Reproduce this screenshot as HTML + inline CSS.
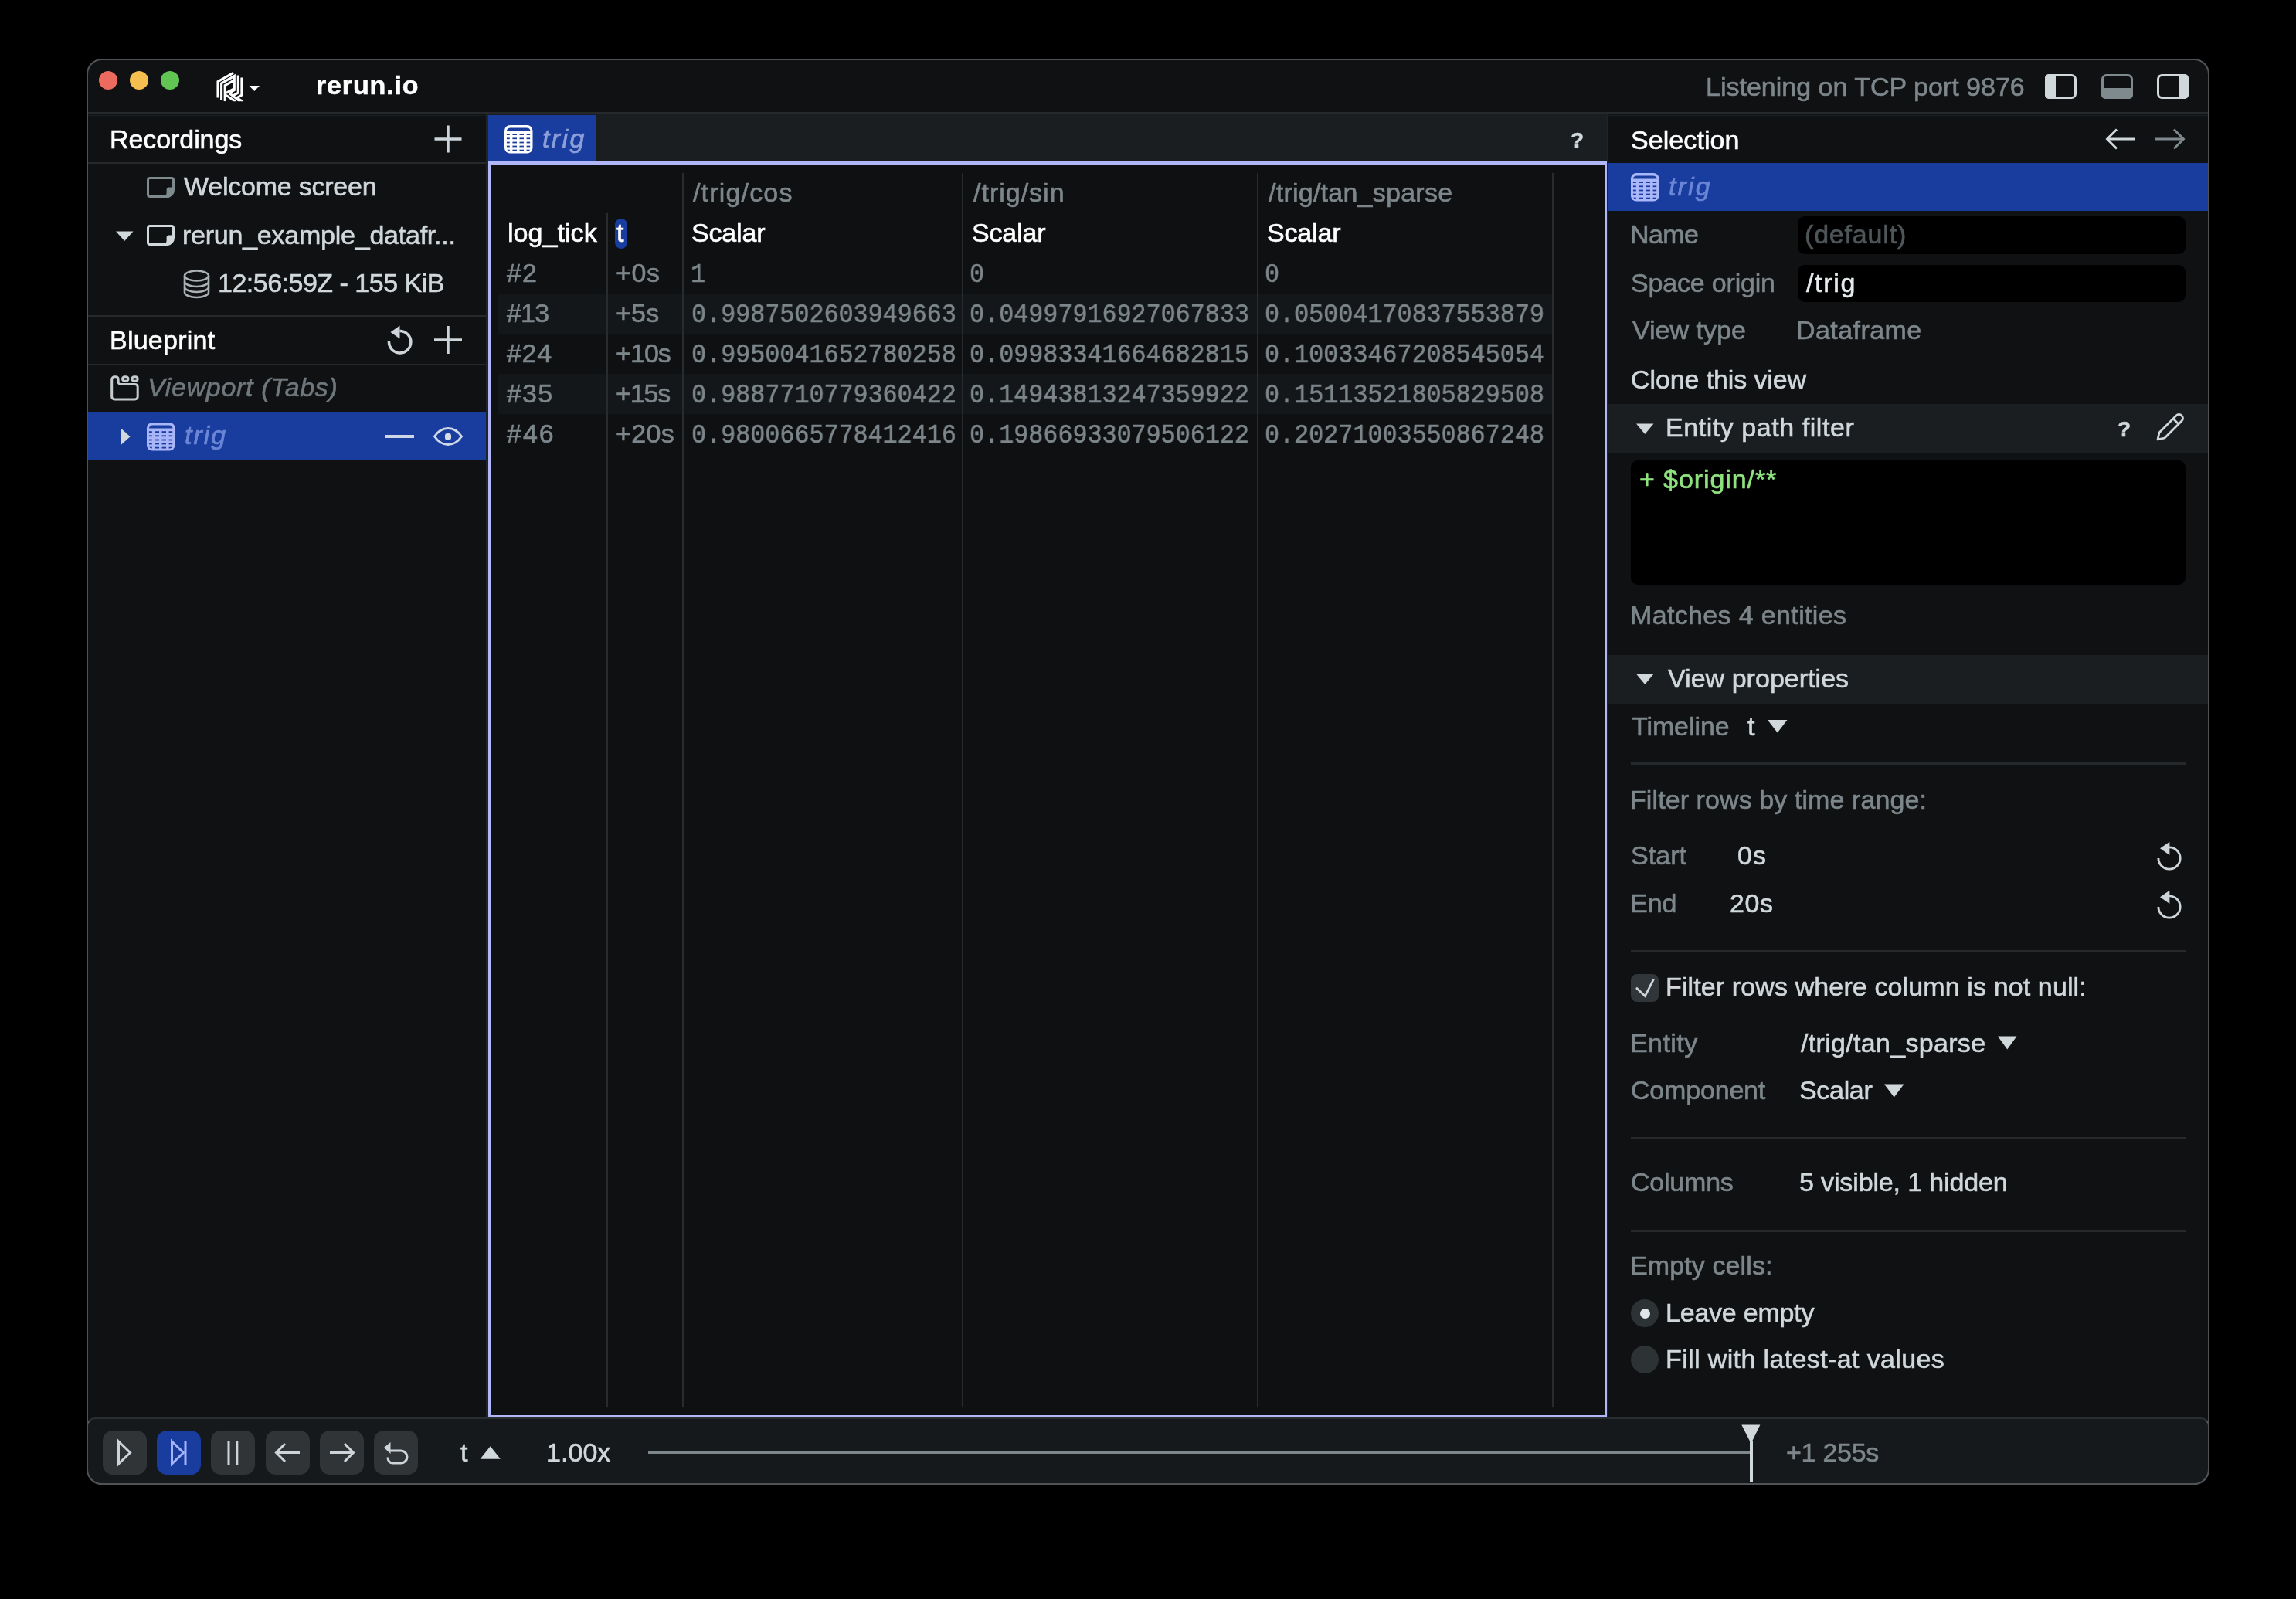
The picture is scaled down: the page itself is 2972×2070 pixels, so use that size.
<!DOCTYPE html>
<html><head><meta charset="utf-8"><style>
html,body{margin:0;padding:0;background:#000000;width:2972px;height:2070px;overflow:hidden}
body>div, #w>div{position:absolute}
.t{white-space:pre;will-change:transform;-webkit-text-stroke:0.6px currentColor}
</style></head><body>
<div style="left:112px;top:76px;width:2748px;height:1846px;background:#0f1113;border-radius:20px;box-sizing:border-box;border:2px solid #505355;"></div><div style="left:114px;top:145px;width:2744px;height:3px;background:#25292c;border-radius:0px;"></div><div style="left:114px;top:149px;width:515px;height:1px;background:#1b1f22;border-radius:0px;"></div><div style="left:2082px;top:149px;width:776px;height:1px;background:#1b1f22;border-radius:0px;"></div><div style="left:128px;top:92px;width:24px;height:24px;background:#ec6a5e;border-radius:12px;"></div><div style="left:168px;top:92px;width:24px;height:24px;background:#f4bf4f;border-radius:12px;"></div><div style="left:208px;top:92px;width:24px;height:24px;background:#61c554;border-radius:12px;"></div><svg style="position:absolute;left:276px;top:89px;overflow:visible" width="44" height="46" viewBox="0 0 44 46"><defs><clipPath id="lc"><rect x="0" y="0" width="44" height="42.3"/></clipPath></defs><g clip-path="url(#lc)" fill="none" stroke="#fff" stroke-width="3.1" stroke-linejoin="miter" stroke-miterlimit="10">
<polyline points="6,37.6 6,16.6 26,5.3"/>
<polyline points="10.6,40.3 10.6,19 27.3,9.4 27.3,27.6 21.8,30.8"/>
<polyline points="15.2,42.2 15.2,21.6 25.4,15.8"/>
<polyline points="16.8,31.3 27.3,25.6"/>
<polyline points="32.3,8.6 32.3,31.2 25.5,35"/>
<polyline points="36.9,11.6 36.9,34.2 30.6,37.8 38.5,42.5"/>
<polyline points="16.6,34.2 29,42.5"/>
<polyline points="20.5,31.8 23,33.2 35,42.5"/>
</g></svg><svg style="position:absolute;left:320px;top:108px;overflow:visible" width="20" height="12" viewBox="0 0 20 12"><polygon points="2.5,3 16,3 9.25,10" fill="#fff"/></svg><div class="t" style="left:408.50px;top:93.01px;font-size:34px;line-height:34px;color:#ffffff;font-weight:700;font-style:normal;font-family:'Liberation Sans', sans-serif;letter-spacing:0.843px;">rerun.io</div><div class="t" style="left:2208.30px;top:94.71px;font-size:34px;line-height:34px;color:#7d878b;font-weight:400;font-style:normal;font-family:'Liberation Sans', sans-serif;letter-spacing:0.000px;">Listening on TCP port 9876</div><svg style="position:absolute;left:2645px;top:95px;overflow:visible" width="46" height="36" viewBox="0 0 46 36"><rect x="3.5" y="2.5" width="38" height="29" rx="5" fill="none" stroke="#d0d8dc" stroke-width="3"/><path d="M7 1H16V33H7A5 5 0 0 1 2 28V6A5 5 0 0 1 7 1Z" fill="#d0d8dc"/></svg><svg style="position:absolute;left:2718px;top:95px;overflow:visible" width="46" height="36" viewBox="0 0 46 36"><rect x="3.5" y="2.5" width="38" height="29" rx="5" fill="none" stroke="#7f8a8f" stroke-width="3"/><path d="M2 19H43V28A5 5 0 0 1 38 33H7A5 5 0 0 1 2 28Z" fill="#7f8a8f"/></svg><svg style="position:absolute;left:2790px;top:95px;overflow:visible" width="46" height="36" viewBox="0 0 46 36"><rect x="3.5" y="2.5" width="38" height="29" rx="5" fill="none" stroke="#d0d8dc" stroke-width="3"/><path d="M30 1H38A5 5 0 0 1 43 6V28A5 5 0 0 1 38 33H30Z" fill="#d0d8dc"/></svg><div style="left:629px;top:148px;width:3px;height:1688px;background:#202427;border-radius:0px;"></div><div class="t" style="left:142.00px;top:162.61px;font-size:34px;line-height:34px;color:#ffffff;font-weight:400;font-style:normal;font-family:'Liberation Sans', sans-serif;letter-spacing:-0.078px;">Recordings</div><svg style="position:absolute;left:560px;top:160px;overflow:visible" width="40" height="40" viewBox="0 0 40 40"><path d="M20 2.5V37.5M2.5 20H37.5" stroke="#cdd5da" stroke-width="3.5"/></svg><div style="left:114px;top:210px;width:515px;height:2px;background:#25292c;border-radius:0px;"></div><svg style="position:absolute;left:190px;top:229px;overflow:visible" width="37" height="28" viewBox="0 0 37 28"><path d="M4 1.5H32A2.5 2.5 0 0 1 34.5 4V17A8.5 8.5 0 0 1 26 25.5H4A2.5 2.5 0 0 1 1.5 23V4A2.5 2.5 0 0 1 4 1.5Z" fill="none" stroke="#7f8a8f" stroke-width="3"/>
<path d="M35 13.6H28.6A3 3 0 0 0 25.6 16.6V20.6A4.9 4.9 0 0 1 20.7 25.5L20.7 27H26A9 9 0 0 0 35 18Z" fill="#7f8a8f"/></svg><div class="t" style="left:237.60px;top:224.21px;font-size:34px;line-height:34px;color:#d0d8dc;font-weight:400;font-style:normal;font-family:'Liberation Sans', sans-serif;letter-spacing:-0.231px;">Welcome screen</div><svg style="position:absolute;left:148px;top:297px;overflow:visible" width="26" height="17" viewBox="0 0 26 17"><polygon points="2,2.5 24.5,2.5 13.25,15" fill="#d0d8dc"/></svg><svg style="position:absolute;left:190px;top:291px;overflow:visible" width="37" height="28" viewBox="0 0 37 28"><path d="M4 1.5H32A2.5 2.5 0 0 1 34.5 4V17A8.5 8.5 0 0 1 26 25.5H4A2.5 2.5 0 0 1 1.5 23V4A2.5 2.5 0 0 1 4 1.5Z" fill="none" stroke="#d0d8dc" stroke-width="3"/>
<path d="M35 13.6H28.6A3 3 0 0 0 25.6 16.6V20.6A4.9 4.9 0 0 1 20.7 25.5L20.7 27H26A9 9 0 0 0 35 18Z" fill="#d0d8dc"/></svg><div class="t" style="left:235.60px;top:287.21px;font-size:34px;line-height:34px;color:#d0d8dc;font-weight:400;font-style:normal;font-family:'Liberation Sans', sans-serif;letter-spacing:-0.236px;">rerun_example_datafr...</div><svg style="position:absolute;left:236px;top:348px;overflow:visible" width="37" height="40" viewBox="0 0 37 40"><g fill="none" stroke="#aab2b6" stroke-width="2.6">
<ellipse cx="18.5" cy="9" rx="15.5" ry="6.5"/>
<path d="M3 9V30.5C3 34 10 37 18.5 37S34 34 34 30.5V9"/>
<path d="M3 16.5C3 20 10 23 18.5 23S34 20 34 16.5"/>
<path d="M3 23.5C3 27 10 30 18.5 30S34 27 34 23.5"/></g></svg><div class="t" style="left:282.00px;top:348.81px;font-size:34px;line-height:34px;color:#d0d8dc;font-weight:400;font-style:normal;font-family:'Liberation Sans', sans-serif;letter-spacing:-0.500px;">12:56:59Z - 155 KiB</div><div style="left:114px;top:408px;width:515px;height:2px;background:#25292c;border-radius:0px;"></div><div class="t" style="left:142.00px;top:422.81px;font-size:34px;line-height:34px;color:#ffffff;font-weight:400;font-style:normal;font-family:'Liberation Sans', sans-serif;letter-spacing:0.237px;">Blueprint</div><svg style="position:absolute;left:498px;top:418px;overflow:visible" width="40" height="44" viewBox="0 0 40 44"><path d="M503.5 441.5A14.2 14.2 0 1 0 517.5 428.5" transform="translate(-498,-418)" fill="none" stroke="#cdd5da" stroke-width="3.5"/>
<polygon points="7.5,12 19.5,3.5 19.5,20.5" fill="#cdd5da"/></svg><svg style="position:absolute;left:560px;top:420px;overflow:visible" width="40" height="40" viewBox="0 0 40 40"><path d="M20 2V38M2 20H38" stroke="#cdd5da" stroke-width="3.5"/></svg><div style="left:114px;top:471px;width:515px;height:2px;background:#25292c;border-radius:0px;"></div><svg style="position:absolute;left:141px;top:484px;overflow:visible" width="42" height="37" viewBox="0 0 42 37"><g fill="none" stroke="#c3cbcf" stroke-width="3">
<path d="M3.7 7.3A3.5 3.5 0 0 1 7.2 3.8H9.1A3 3 0 0 1 12.1 6.8V10.4A3 3 0 0 0 15.1 13.4H33.7A3.5 3.5 0 0 1 37.2 16.9V29.4A3.5 3.5 0 0 1 33.7 32.9H7.2A3.5 3.5 0 0 1 3.7 29.4Z"/>
<rect x="17.5" y="3.8" width="7.5" height="5.5" rx="2.75"/><rect x="29.8" y="3.8" width="7.4" height="5.5" rx="2.75"/></g></svg><div class="t" style="left:191.00px;top:483.81px;font-size:34px;line-height:34px;color:#6f787c;font-weight:400;font-style:italic;font-family:'Liberation Sans', sans-serif;letter-spacing:0.686px;">Viewport (Tabs)</div><div style="left:114px;top:534px;width:515px;height:61px;background:#193c9f;border-radius:0px;"></div><svg style="position:absolute;left:152px;top:550px;overflow:visible" width="20" height="30" viewBox="0 0 20 30"><polygon points="4,4 16.5,15.2 4,26.5" fill="#d0d8dc"/></svg><svg style="position:absolute;left:190px;top:546.5px;overflow:visible" width="37" height="37" viewBox="0 0 37 37"><defs><clipPath id="tic1"><rect x="2.6" y="2.6" width="31.3" height="31.3" rx="4.8"/></clipPath></defs>
<rect x="0" y="0" width="36.5" height="36.5" rx="7.2" fill="#aab6fa"/>
<g clip-path="url(#tic1)" fill="#193c9f"><path d="M2.8 7.4L33.7 7.4Q33 3.6 28.5 3.4L8 3.4Q3.5 3.6 2.8 7.4Z"/><rect x="2.8" y="11.2" width="4.0" height="1.8"/><rect x="10.4" y="11.2" width="5.6" height="1.8"/><rect x="19.5" y="11.2" width="5.5" height="1.8"/><rect x="28.6" y="11.2" width="4.6" height="1.8"/><rect x="2.8" y="16.4" width="4.0" height="1.8"/><rect x="10.4" y="16.4" width="5.6" height="1.8"/><rect x="19.5" y="16.4" width="5.5" height="1.8"/><rect x="28.6" y="16.4" width="4.6" height="1.8"/><rect x="2.8" y="21.6" width="4.0" height="1.8"/><rect x="10.4" y="21.6" width="5.6" height="1.8"/><rect x="19.5" y="21.6" width="5.5" height="1.8"/><rect x="28.6" y="21.6" width="4.6" height="1.8"/><rect x="2.8" y="26.6" width="4.0" height="1.8"/><rect x="10.4" y="26.6" width="5.6" height="1.8"/><rect x="19.5" y="26.6" width="5.5" height="1.8"/><rect x="28.6" y="26.6" width="4.6" height="1.8"/><rect x="2.8" y="31.7" width="4.0" height="1.8"/><rect x="10.4" y="31.7" width="5.6" height="1.8"/><rect x="19.5" y="31.7" width="5.5" height="1.8"/><rect x="28.6" y="31.7" width="4.6" height="1.8"/></g></svg><div class="t" style="left:239.00px;top:546.11px;font-size:34px;line-height:34px;color:#6c86d6;font-weight:400;font-style:italic;font-family:'Liberation Sans', sans-serif;letter-spacing:2.000px;">trig</div><div style="left:499px;top:563px;width:37px;height:3.7000000000000455px;background:#cdd7e6;border-radius:0px;"></div><svg style="position:absolute;left:560px;top:552px;overflow:visible" width="40" height="26" viewBox="0 0 40 26"><path d="M2.5 13C8 5 14 2.5 20 2.5S32 5 37.5 13C32 21 26 23.5 20 23.5S8 21 2.5 13Z" fill="none" stroke="#cdd7e6" stroke-width="3"/>
<rect x="16" y="9" width="8" height="8.5" rx="3" fill="#d5dde4"/></svg><div style="left:632px;top:148px;width:1448px;height:60.599999999999994px;background:#1b1e21;border-radius:0px;"></div><div style="left:632px;top:148.7px;width:140px;height:59.30000000000001px;background:#193c9f;border-radius:0px;"></div><svg style="position:absolute;left:653px;top:161.5px;overflow:visible" width="37" height="37" viewBox="0 0 37 37"><defs><clipPath id="tic2"><rect x="2.6" y="2.6" width="31.3" height="31.3" rx="4.8"/></clipPath></defs>
<rect x="0" y="0" width="36.5" height="36.5" rx="7.2" fill="#ffffff"/>
<g clip-path="url(#tic2)" fill="#193c9f"><path d="M2.8 7.4L33.7 7.4Q33 3.6 28.5 3.4L8 3.4Q3.5 3.6 2.8 7.4Z"/><rect x="2.8" y="11.2" width="4.0" height="1.8"/><rect x="10.4" y="11.2" width="5.6" height="1.8"/><rect x="19.5" y="11.2" width="5.5" height="1.8"/><rect x="28.6" y="11.2" width="4.6" height="1.8"/><rect x="2.8" y="16.4" width="4.0" height="1.8"/><rect x="10.4" y="16.4" width="5.6" height="1.8"/><rect x="19.5" y="16.4" width="5.5" height="1.8"/><rect x="28.6" y="16.4" width="4.6" height="1.8"/><rect x="2.8" y="21.6" width="4.0" height="1.8"/><rect x="10.4" y="21.6" width="5.6" height="1.8"/><rect x="19.5" y="21.6" width="5.5" height="1.8"/><rect x="28.6" y="21.6" width="4.6" height="1.8"/><rect x="2.8" y="26.6" width="4.0" height="1.8"/><rect x="10.4" y="26.6" width="5.6" height="1.8"/><rect x="19.5" y="26.6" width="5.5" height="1.8"/><rect x="28.6" y="26.6" width="4.6" height="1.8"/><rect x="2.8" y="31.7" width="4.0" height="1.8"/><rect x="10.4" y="31.7" width="5.6" height="1.8"/><rect x="19.5" y="31.7" width="5.5" height="1.8"/><rect x="28.6" y="31.7" width="4.6" height="1.8"/></g></svg><div class="t" style="left:701.50px;top:161.71px;font-size:34px;line-height:34px;color:#8d9fd9;font-weight:400;font-style:italic;font-family:'Liberation Sans', sans-serif;letter-spacing:2.367px;">trig</div><div class="t" style="left:2033.00px;top:167.99px;font-size:28px;line-height:28px;color:#d0d8dc;font-weight:700;font-style:normal;font-family:'Liberation Sans', sans-serif;letter-spacing:0.000px;">?</div><div style="left:632px;top:208.6px;width:1448px;height:1626.4px;background:#0e1012;border-radius:0px;box-sizing:border-box;border:3px solid #b0b6f7;border-top-width:5.2px;"></div><div style="left:645px;top:379.8px;width:1365px;height:52.0px;background:#141719;border-radius:0px;"></div><div style="left:645px;top:484px;width:1365px;height:51.700000000000045px;background:#141719;border-radius:0px;"></div><div style="left:784.5px;top:276px;width:2.0px;height:1546px;background:#292c2f;border-radius:0px;"></div><div style="left:883px;top:224px;width:2px;height:1598px;background:#292c2f;border-radius:0px;"></div><div style="left:1245px;top:224px;width:2px;height:1598px;background:#292c2f;border-radius:0px;"></div><div style="left:1627px;top:224px;width:2px;height:1598px;background:#292c2f;border-radius:0px;"></div><div style="left:2009px;top:224px;width:2px;height:1598px;background:#292c2f;border-radius:0px;"></div><div class="t" style="left:897.40px;top:231.91px;font-size:34px;line-height:34px;color:#7d878b;font-weight:400;font-style:normal;font-family:'Liberation Sans', sans-serif;letter-spacing:1.175px;">/trig/cos</div><div class="t" style="left:1260.00px;top:231.81px;font-size:34px;line-height:34px;color:#7d878b;font-weight:400;font-style:normal;font-family:'Liberation Sans', sans-serif;letter-spacing:1.000px;">/trig/sin</div><div class="t" style="left:1642.00px;top:231.81px;font-size:34px;line-height:34px;color:#7d878b;font-weight:400;font-style:normal;font-family:'Liberation Sans', sans-serif;letter-spacing:0.247px;">/trig/tan_sparse</div><div class="t" style="left:657.20px;top:284.01px;font-size:34px;line-height:34px;color:#ffffff;font-weight:400;font-style:normal;font-family:'Liberation Sans', sans-serif;letter-spacing:0.057px;">log_tick</div><div style="left:795.5px;top:283px;width:16.0px;height:38.5px;background:#193c9f;border-radius:8px;"></div><div class="t" style="left:797.50px;top:284.01px;font-size:34px;line-height:34px;color:#ffffff;font-weight:400;font-style:normal;font-family:'Liberation Sans', sans-serif;letter-spacing:0.000px;">t</div><div class="t" style="left:895.40px;top:284.01px;font-size:34px;line-height:34px;color:#ffffff;font-weight:400;font-style:normal;font-family:'Liberation Sans', sans-serif;letter-spacing:-0.180px;">Scalar</div><div class="t" style="left:1258.00px;top:284.01px;font-size:34px;line-height:34px;color:#ffffff;font-weight:400;font-style:normal;font-family:'Liberation Sans', sans-serif;letter-spacing:-0.180px;">Scalar</div><div class="t" style="left:1640.00px;top:284.01px;font-size:34px;line-height:34px;color:#ffffff;font-weight:400;font-style:normal;font-family:'Liberation Sans', sans-serif;letter-spacing:-0.180px;">Scalar</div><div class="t" style="left:655.50px;top:335.91px;font-size:34px;line-height:34px;color:#7d878b;font-weight:400;font-style:normal;font-family:'Liberation Sans', sans-serif;letter-spacing:1.100px;">#2</div><div class="t" style="left:796.50px;top:335.91px;font-size:34px;line-height:34px;color:#7d878b;font-weight:400;font-style:normal;font-family:'Liberation Sans', sans-serif;letter-spacing:0.650px;">+0s</div><div class="t" style="left:894.11px;top:338.78px;font-size:35.4px;line-height:35.4px;color:#7d878b;font-weight:400;font-style:normal;font-family:'Liberation Mono', monospace;letter-spacing:0.000px;transform:scaleX(0.897);transform-origin:0 0;">1</div><div class="t" style="left:1255.21px;top:338.78px;font-size:35.4px;line-height:35.4px;color:#7d878b;font-weight:400;font-style:normal;font-family:'Liberation Mono', monospace;letter-spacing:0.000px;transform:scaleX(0.897);transform-origin:0 0;">0</div><div class="t" style="left:1637.21px;top:338.78px;font-size:35.4px;line-height:35.4px;color:#7d878b;font-weight:400;font-style:normal;font-family:'Liberation Mono', monospace;letter-spacing:0.000px;transform:scaleX(0.897);transform-origin:0 0;">0</div><div class="t" style="left:655.50px;top:387.81px;font-size:34px;line-height:34px;color:#7d878b;font-weight:400;font-style:normal;font-family:'Liberation Sans', sans-serif;letter-spacing:-0.800px;">#13</div><div class="t" style="left:796.50px;top:387.81px;font-size:34px;line-height:34px;color:#7d878b;font-weight:400;font-style:normal;font-family:'Liberation Sans', sans-serif;letter-spacing:0.250px;">+5s</div><div class="t" style="left:895.01px;top:390.68px;font-size:35.4px;line-height:35.4px;color:#7d878b;font-weight:400;font-style:normal;font-family:'Liberation Mono', monospace;letter-spacing:0.000px;transform:scaleX(0.897);transform-origin:0 0;">0.9987502603949663</div><div class="t" style="left:1255.21px;top:390.68px;font-size:35.4px;line-height:35.4px;color:#7d878b;font-weight:400;font-style:normal;font-family:'Liberation Mono', monospace;letter-spacing:0.000px;transform:scaleX(0.897);transform-origin:0 0;">0.04997916927067833</div><div class="t" style="left:1637.21px;top:390.68px;font-size:35.4px;line-height:35.4px;color:#7d878b;font-weight:400;font-style:normal;font-family:'Liberation Mono', monospace;letter-spacing:0.000px;transform:scaleX(0.897);transform-origin:0 0;">0.05004170837553879</div><div class="t" style="left:655.50px;top:440.11px;font-size:34px;line-height:34px;color:#7d878b;font-weight:400;font-style:normal;font-family:'Liberation Sans', sans-serif;letter-spacing:0.700px;">#24</div><div class="t" style="left:796.50px;top:440.11px;font-size:34px;line-height:34px;color:#7d878b;font-weight:400;font-style:normal;font-family:'Liberation Sans', sans-serif;letter-spacing:-0.933px;">+10s</div><div class="t" style="left:895.01px;top:442.98px;font-size:35.4px;line-height:35.4px;color:#7d878b;font-weight:400;font-style:normal;font-family:'Liberation Mono', monospace;letter-spacing:0.000px;transform:scaleX(0.897);transform-origin:0 0;">0.9950041652780258</div><div class="t" style="left:1255.21px;top:442.98px;font-size:35.4px;line-height:35.4px;color:#7d878b;font-weight:400;font-style:normal;font-family:'Liberation Mono', monospace;letter-spacing:0.000px;transform:scaleX(0.897);transform-origin:0 0;">0.09983341664682815</div><div class="t" style="left:1637.21px;top:442.98px;font-size:35.4px;line-height:35.4px;color:#7d878b;font-weight:400;font-style:normal;font-family:'Liberation Mono', monospace;letter-spacing:0.000px;transform:scaleX(0.897);transform-origin:0 0;">0.10033467208545054</div><div class="t" style="left:655.50px;top:492.31px;font-size:34px;line-height:34px;color:#7d878b;font-weight:400;font-style:normal;font-family:'Liberation Sans', sans-serif;letter-spacing:1.200px;">#35</div><div class="t" style="left:796.50px;top:492.31px;font-size:34px;line-height:34px;color:#7d878b;font-weight:400;font-style:normal;font-family:'Liberation Sans', sans-serif;letter-spacing:-1.167px;">+15s</div><div class="t" style="left:895.01px;top:495.18px;font-size:35.4px;line-height:35.4px;color:#7d878b;font-weight:400;font-style:normal;font-family:'Liberation Mono', monospace;letter-spacing:0.000px;transform:scaleX(0.897);transform-origin:0 0;">0.9887710779360422</div><div class="t" style="left:1255.21px;top:495.18px;font-size:35.4px;line-height:35.4px;color:#7d878b;font-weight:400;font-style:normal;font-family:'Liberation Mono', monospace;letter-spacing:0.000px;transform:scaleX(0.897);transform-origin:0 0;">0.14943813247359922</div><div class="t" style="left:1637.21px;top:495.18px;font-size:35.4px;line-height:35.4px;color:#7d878b;font-weight:400;font-style:normal;font-family:'Liberation Mono', monospace;letter-spacing:0.000px;transform:scaleX(0.897);transform-origin:0 0;">0.15113521805829508</div><div class="t" style="left:655.50px;top:544.11px;font-size:34px;line-height:34px;color:#7d878b;font-weight:400;font-style:normal;font-family:'Liberation Sans', sans-serif;letter-spacing:2.000px;">#46</div><div class="t" style="left:796.50px;top:544.11px;font-size:34px;line-height:34px;color:#7d878b;font-weight:400;font-style:normal;font-family:'Liberation Sans', sans-serif;letter-spacing:0.400px;">+20s</div><div class="t" style="left:895.01px;top:546.98px;font-size:35.4px;line-height:35.4px;color:#7d878b;font-weight:400;font-style:normal;font-family:'Liberation Mono', monospace;letter-spacing:0.000px;transform:scaleX(0.897);transform-origin:0 0;">0.9800665778412416</div><div class="t" style="left:1255.21px;top:546.98px;font-size:35.4px;line-height:35.4px;color:#7d878b;font-weight:400;font-style:normal;font-family:'Liberation Mono', monospace;letter-spacing:0.000px;transform:scaleX(0.897);transform-origin:0 0;">0.19866933079506122</div><div class="t" style="left:1637.21px;top:546.98px;font-size:35.4px;line-height:35.4px;color:#7d878b;font-weight:400;font-style:normal;font-family:'Liberation Mono', monospace;letter-spacing:0.000px;transform:scaleX(0.897);transform-origin:0 0;">0.20271003550867248</div><div style="left:2080px;top:148px;width:2px;height:1688px;background:#202427;border-radius:0px;"></div><div class="t" style="left:2110.80px;top:163.51px;font-size:34px;line-height:34px;color:#ffffff;font-weight:400;font-style:normal;font-family:'Liberation Sans', sans-serif;letter-spacing:0.075px;">Selection</div><svg style="position:absolute;left:2724px;top:164px;overflow:visible" width="44" height="32" viewBox="0 0 44 32"><path d="M40 16H4M16 3.5L3.5 16L16 28.5" fill="none" stroke="#d0d8dc" stroke-width="2.9"/></svg><svg style="position:absolute;left:2787px;top:164px;overflow:visible" width="44" height="32" viewBox="0 0 44 32"><path d="M3 16H39M27 3.5L39.5 16L27 28.5" fill="none" stroke="#7f8a8f" stroke-width="2.9"/></svg><div style="left:2082px;top:210.7px;width:776px;height:62.69999999999999px;background:#193c9f;border-radius:0px;"></div><svg style="position:absolute;left:2111px;top:224px;overflow:visible" width="37" height="37" viewBox="0 0 37 37"><defs><clipPath id="tic3"><rect x="2.6" y="2.6" width="31.3" height="31.3" rx="4.8"/></clipPath></defs>
<rect x="0" y="0" width="36.5" height="36.5" rx="7.2" fill="#aab6fa"/>
<g clip-path="url(#tic3)" fill="#193c9f"><path d="M2.8 7.4L33.7 7.4Q33 3.6 28.5 3.4L8 3.4Q3.5 3.6 2.8 7.4Z"/><rect x="2.8" y="11.2" width="4.0" height="1.8"/><rect x="10.4" y="11.2" width="5.6" height="1.8"/><rect x="19.5" y="11.2" width="5.5" height="1.8"/><rect x="28.6" y="11.2" width="4.6" height="1.8"/><rect x="2.8" y="16.4" width="4.0" height="1.8"/><rect x="10.4" y="16.4" width="5.6" height="1.8"/><rect x="19.5" y="16.4" width="5.5" height="1.8"/><rect x="28.6" y="16.4" width="4.6" height="1.8"/><rect x="2.8" y="21.6" width="4.0" height="1.8"/><rect x="10.4" y="21.6" width="5.6" height="1.8"/><rect x="19.5" y="21.6" width="5.5" height="1.8"/><rect x="28.6" y="21.6" width="4.6" height="1.8"/><rect x="2.8" y="26.6" width="4.0" height="1.8"/><rect x="10.4" y="26.6" width="5.6" height="1.8"/><rect x="19.5" y="26.6" width="5.5" height="1.8"/><rect x="28.6" y="26.6" width="4.6" height="1.8"/><rect x="2.8" y="31.7" width="4.0" height="1.8"/><rect x="10.4" y="31.7" width="5.6" height="1.8"/><rect x="19.5" y="31.7" width="5.5" height="1.8"/><rect x="28.6" y="31.7" width="4.6" height="1.8"/></g></svg><div class="t" style="left:2159.70px;top:224.11px;font-size:34px;line-height:34px;color:#6c86d6;font-weight:400;font-style:italic;font-family:'Liberation Sans', sans-serif;letter-spacing:2.167px;">trig</div><div class="t" style="left:2109.80px;top:286.21px;font-size:34px;line-height:34px;color:#7d878b;font-weight:400;font-style:normal;font-family:'Liberation Sans', sans-serif;letter-spacing:-0.600px;">Name</div><div style="left:2327px;top:280.4px;width:502px;height:48.5px;background:#000000;border-radius:9px;"></div><div class="t" style="left:2336.00px;top:286.21px;font-size:34px;line-height:34px;color:#4f5659;font-weight:400;font-style:normal;font-family:'Liberation Sans', sans-serif;letter-spacing:0.812px;">(default)</div><div class="t" style="left:2110.80px;top:349.21px;font-size:34px;line-height:34px;color:#7d878b;font-weight:400;font-style:normal;font-family:'Liberation Sans', sans-serif;letter-spacing:-0.182px;">Space origin</div><div style="left:2327px;top:342.8px;width:502px;height:48.099999999999966px;background:#000000;border-radius:9px;"></div><div class="t" style="left:2337.60px;top:349.21px;font-size:34px;line-height:34px;color:#e6ecee;font-weight:400;font-style:normal;font-family:'Liberation Sans', sans-serif;letter-spacing:1.675px;">/trig</div><div class="t" style="left:2112.80px;top:410.21px;font-size:34px;line-height:34px;color:#7d878b;font-weight:400;font-style:normal;font-family:'Liberation Sans', sans-serif;letter-spacing:0.000px;">View type</div><div class="t" style="left:2324.80px;top:410.21px;font-size:34px;line-height:34px;color:#7d878b;font-weight:400;font-style:normal;font-family:'Liberation Sans', sans-serif;letter-spacing:0.438px;">Dataframe</div><div class="t" style="left:2110.80px;top:473.61px;font-size:34px;line-height:34px;color:#d0d8dc;font-weight:400;font-style:normal;font-family:'Liberation Sans', sans-serif;letter-spacing:-0.107px;">Clone this view</div><div style="left:2082px;top:523px;width:776px;height:63px;background:#1b1e21;border-radius:0px;"></div><svg style="position:absolute;left:2116px;top:546px;overflow:visible" width="26" height="18" viewBox="0 0 26 18"><polygon points="2,2.5 24.5,2.5 13.25,16" fill="#d0d8dc"/></svg><div class="t" style="left:2155.90px;top:536.21px;font-size:34px;line-height:34px;color:#d0d8dc;font-weight:400;font-style:normal;font-family:'Liberation Sans', sans-serif;letter-spacing:0.553px;">Entity path filter</div><div class="t" style="left:2741.00px;top:541.99px;font-size:28px;line-height:28px;color:#d0d8dc;font-weight:700;font-style:normal;font-family:'Liberation Sans', sans-serif;letter-spacing:0.000px;">?</div><svg style="position:absolute;left:2788px;top:534px;overflow:visible" width="40" height="40" viewBox="0 0 40 40"><path d="M5 35L7 26L29 4C31 2 34 2 36 4S38 9 36 11L14 33Z M25 8L32 15" fill="none" stroke="#d0d8dc" stroke-width="2.8" stroke-linejoin="round"/></svg><div style="left:2111px;top:596.4px;width:718px;height:160.30000000000007px;background:#000000;border-radius:9px;"></div><div class="t" style="left:2122.00px;top:602.51px;font-size:34px;line-height:34px;color:#8ee37f;font-weight:400;font-style:normal;font-family:'Liberation Sans', sans-serif;letter-spacing:0.909px;">+ $origin/**</div><div class="t" style="left:2109.80px;top:779.21px;font-size:34px;line-height:34px;color:#7d878b;font-weight:400;font-style:normal;font-family:'Liberation Sans', sans-serif;letter-spacing:0.353px;">Matches 4 entities</div><div style="left:2082px;top:848px;width:776px;height:62.5px;background:#1b1e21;border-radius:0px;"></div><svg style="position:absolute;left:2116px;top:870px;overflow:visible" width="26" height="18" viewBox="0 0 26 18"><polygon points="2,2.5 24.5,2.5 13.25,16" fill="#d0d8dc"/></svg><div class="t" style="left:2158.90px;top:861.01px;font-size:34px;line-height:34px;color:#d0d8dc;font-weight:400;font-style:normal;font-family:'Liberation Sans', sans-serif;letter-spacing:0.029px;">View properties</div><div class="t" style="left:2111.80px;top:922.81px;font-size:34px;line-height:34px;color:#7d878b;font-weight:400;font-style:normal;font-family:'Liberation Sans', sans-serif;letter-spacing:-0.086px;">Timeline</div><div class="t" style="left:2261.70px;top:922.81px;font-size:34px;line-height:34px;color:#d0d8dc;font-weight:400;font-style:normal;font-family:'Liberation Sans', sans-serif;letter-spacing:0.000px;">t</div><svg style="position:absolute;left:2286px;top:930px;overflow:visible" width="30" height="22" viewBox="0 0 30 22"><polygon points="2,2 27.5,2 14.75,18.5" fill="#d0d8dc"/></svg><div style="left:2111px;top:987px;width:718px;height:2.5px;background:#25292c;border-radius:0px;"></div><div style="left:2111px;top:1229.5px;width:718px;height:2.5px;background:#25292c;border-radius:0px;"></div><div style="left:2111px;top:1471.5px;width:718px;height:2.5px;background:#25292c;border-radius:0px;"></div><div style="left:2111px;top:1592px;width:718px;height:2.5px;background:#25292c;border-radius:0px;"></div><div class="t" style="left:2109.80px;top:1017.51px;font-size:34px;line-height:34px;color:#7d878b;font-weight:400;font-style:normal;font-family:'Liberation Sans', sans-serif;letter-spacing:0.088px;">Filter rows by time range:</div><div class="t" style="left:2110.80px;top:1090.01px;font-size:34px;line-height:34px;color:#7d878b;font-weight:400;font-style:normal;font-family:'Liberation Sans', sans-serif;letter-spacing:0.050px;">Start</div><div class="t" style="left:2249.00px;top:1090.01px;font-size:34px;line-height:34px;color:#d0d8dc;font-weight:400;font-style:normal;font-family:'Liberation Sans', sans-serif;letter-spacing:1.000px;">0s</div><div class="t" style="left:2109.80px;top:1151.71px;font-size:34px;line-height:34px;color:#7d878b;font-weight:400;font-style:normal;font-family:'Liberation Sans', sans-serif;letter-spacing:0.000px;">End</div><div class="t" style="left:2239.40px;top:1151.71px;font-size:34px;line-height:34px;color:#d0d8dc;font-weight:400;font-style:normal;font-family:'Liberation Sans', sans-serif;letter-spacing:0.650px;">20s</div><svg style="position:absolute;left:2790px;top:1088px;overflow:visible" width="36" height="42" viewBox="0 0 36 42"><path d="M3.9 23A14.1 14.1 0 1 0 18 8.9" fill="none" stroke="#cdd5da" stroke-width="2.9"/>
<polygon points="6,10.2 18.4,1.7 18.4,19" fill="#cdd5da"/></svg><svg style="position:absolute;left:2790px;top:1150.5px;overflow:visible" width="36" height="42" viewBox="0 0 36 42"><path d="M3.9 23A14.1 14.1 0 1 0 18 8.9" fill="none" stroke="#cdd5da" stroke-width="2.9"/>
<polygon points="6,10.2 18.4,1.7 18.4,19" fill="#cdd5da"/></svg><div style="left:2111.2px;top:1260.5px;width:36.30000000000018px;height:36.299999999999955px;background:#31363a;border-radius:8px;"></div><svg style="position:absolute;left:2111px;top:1260px;overflow:visible" width="37" height="37" viewBox="0 0 37 37"><path d="M7 18.7L18.4 29.5L29.5 7.6" fill="none" stroke="#d0d8dc" stroke-width="2.7"/></svg><div class="t" style="left:2155.90px;top:1259.71px;font-size:34px;line-height:34px;color:#d0d8dc;font-weight:400;font-style:normal;font-family:'Liberation Sans', sans-serif;letter-spacing:0.119px;">Filter rows where column is not null:</div><div class="t" style="left:2109.80px;top:1333.21px;font-size:34px;line-height:34px;color:#7d878b;font-weight:400;font-style:normal;font-family:'Liberation Sans', sans-serif;letter-spacing:0.440px;">Entity</div><div class="t" style="left:2330.60px;top:1333.21px;font-size:34px;line-height:34px;color:#d0d8dc;font-weight:400;font-style:normal;font-family:'Liberation Sans', sans-serif;letter-spacing:0.313px;">/trig/tan_sparse</div><svg style="position:absolute;left:2584px;top:1339px;overflow:visible" width="30" height="22" viewBox="0 0 30 22"><polygon points="2,2.5 26.5,2.5 14.25,19.5" fill="#d0d8dc"/></svg><div class="t" style="left:2110.80px;top:1393.81px;font-size:34px;line-height:34px;color:#7d878b;font-weight:400;font-style:normal;font-family:'Liberation Sans', sans-serif;letter-spacing:-0.188px;">Component</div><div class="t" style="left:2329.30px;top:1393.81px;font-size:34px;line-height:34px;color:#d0d8dc;font-weight:400;font-style:normal;font-family:'Liberation Sans', sans-serif;letter-spacing:-0.320px;">Scalar</div><svg style="position:absolute;left:2437px;top:1401px;overflow:visible" width="30" height="22" viewBox="0 0 30 22"><polygon points="2,2.5 27.5,2.5 14.75,19.5" fill="#d0d8dc"/></svg><div class="t" style="left:2110.80px;top:1513.41px;font-size:34px;line-height:34px;color:#7d878b;font-weight:400;font-style:normal;font-family:'Liberation Sans', sans-serif;letter-spacing:-0.217px;">Columns</div><div class="t" style="left:2329.30px;top:1513.41px;font-size:34px;line-height:34px;color:#d0d8dc;font-weight:400;font-style:normal;font-family:'Liberation Sans', sans-serif;letter-spacing:-0.139px;">5 visible, 1 hidden</div><div class="t" style="left:2109.80px;top:1621.41px;font-size:34px;line-height:34px;color:#7d878b;font-weight:400;font-style:normal;font-family:'Liberation Sans', sans-serif;letter-spacing:0.109px;">Empty cells:</div><div style="left:2111px;top:1682px;width:36px;height:36px;background:#2d3235;border-radius:18px;"></div><div style="left:2122.5px;top:1693.5px;width:13.0px;height:13.0px;background:#dfe5e8;border-radius:7px;"></div><div class="t" style="left:2155.90px;top:1681.71px;font-size:34px;line-height:34px;color:#d0d8dc;font-weight:400;font-style:normal;font-family:'Liberation Sans', sans-serif;letter-spacing:-0.220px;">Leave empty</div><div style="left:2111px;top:1742px;width:36px;height:36px;background:#2d3235;border-radius:18px;"></div><div class="t" style="left:2155.90px;top:1741.61px;font-size:34px;line-height:34px;color:#d0d8dc;font-weight:400;font-style:normal;font-family:'Liberation Sans', sans-serif;letter-spacing:0.376px;">Fill with latest-at values</div><div style="left:112px;top:1835px;width:2748px;height:87px;background:#16191b;border-radius:20px;box-sizing:border-box;border:2px solid #2a2e31;border-bottom-color:#505355;border-left-color:#505355;border-right-color:#505355;border-radius:11px 11px 20px 20px;"></div><div style="left:133.0px;top:1852px;width:57.0px;height:57px;background:#303437;border-radius:13px;"></div><div style="left:203.2px;top:1852px;width:57.0px;height:57px;background:#193c9f;border-radius:13px;"></div><div style="left:273.4px;top:1852px;width:57.0px;height:57px;background:#303437;border-radius:13px;"></div><div style="left:343.6px;top:1852px;width:57.0px;height:57px;background:#303437;border-radius:13px;"></div><div style="left:413.8px;top:1852px;width:57.0px;height:57px;background:#303437;border-radius:13px;"></div><div style="left:484.0px;top:1852px;width:57.0px;height:57px;background:#303437;border-radius:13px;"></div><svg style="position:absolute;left:133px;top:1852px;overflow:visible" width="57" height="57" viewBox="0 0 57 57"><polygon points="20.5,14 35.5,28.5 20.5,43" fill="none" stroke="#cdd5da" stroke-width="3"/></svg><svg style="position:absolute;left:203.2px;top:1852px;overflow:visible" width="57" height="57" viewBox="0 0 57 57"><polygon points="19.5,14 34.5,28.5 19.5,43" fill="none" stroke="#a4b4fa" stroke-width="3"/><path d="M37 13V44" stroke="#a4b4fa" stroke-width="3"/></svg><svg style="position:absolute;left:273.4px;top:1852px;overflow:visible" width="57" height="57" viewBox="0 0 57 57"><path d="M23 13V44M33.8 13V44" stroke="#cdd5da" stroke-width="3"/></svg><svg style="position:absolute;left:343.6px;top:1852px;overflow:visible" width="57" height="57" viewBox="0 0 57 57"><path d="M44 28.5H13.5M25 17L13.5 28.5L25 40" fill="none" stroke="#cdd5da" stroke-width="3"/></svg><svg style="position:absolute;left:413.8px;top:1852px;overflow:visible" width="57" height="57" viewBox="0 0 57 57"><path d="M13 28.5H43.5M32 17L43.5 28.5L32 40" fill="none" stroke="#cdd5da" stroke-width="3"/></svg><svg style="position:absolute;left:484px;top:1852px;overflow:visible" width="57" height="57" viewBox="0 0 57 57"><path d="M18 34.5C18 40 21 42 25 42H35A8 8 0 0 0 35 26H21" fill="none" stroke="#cdd5da" stroke-width="3"/>
<polygon points="13,22 21.5,15 21.5,30" fill="#cdd5da"/></svg><div class="t" style="left:595.50px;top:1862.51px;font-size:34px;line-height:34px;color:#d0d8dc;font-weight:400;font-style:normal;font-family:'Liberation Sans', sans-serif;letter-spacing:0.000px;">t</div><svg style="position:absolute;left:619px;top:1870px;overflow:visible" width="32" height="22" viewBox="0 0 32 22"><polygon points="2.6,18.8 15.7,2.3 28.8,18.8" fill="#d0d8dc"/></svg><div class="t" style="left:707.30px;top:1862.81px;font-size:34px;line-height:34px;color:#d0d8dc;font-weight:400;font-style:normal;font-family:'Liberation Sans', sans-serif;letter-spacing:0.050px;">1.00x</div><div style="left:839px;top:1879px;width:1427px;height:3px;background:#7e888c;border-radius:0px;"></div><svg style="position:absolute;left:2252px;top:1842px;overflow:visible" width="30" height="30" viewBox="0 0 30 30"><polygon points="2.3,2.4 26.4,2.4 14.6,26.8" fill="#d0d8dc"/></svg><div style="left:2264.6px;top:1866px;width:4.599999999999909px;height:52px;background:#d0d8dc;border-radius:0px;"></div><div class="t" style="left:2312.30px;top:1862.81px;font-size:34px;line-height:34px;color:#7d878b;font-weight:400;font-style:normal;font-family:'Liberation Sans', sans-serif;letter-spacing:-0.267px;">+1 255s</div>
</body></html>
